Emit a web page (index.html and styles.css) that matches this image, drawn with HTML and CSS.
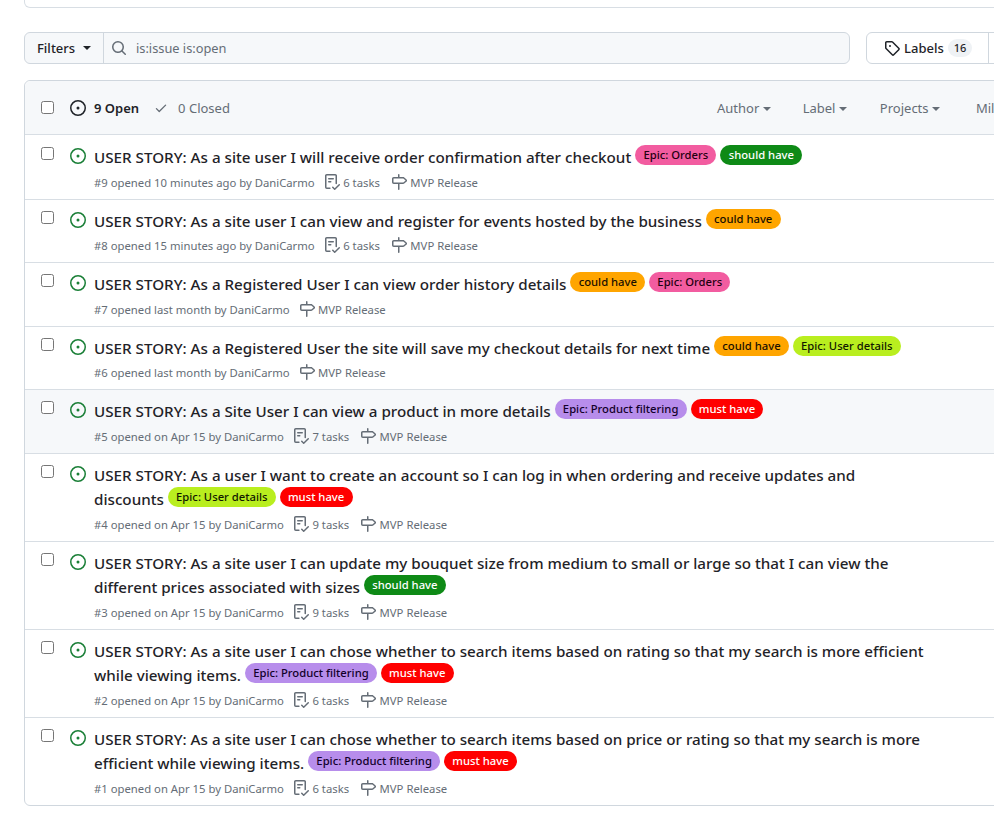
FILE: index.html
```html
<!DOCTYPE html>
<html>
<head>
  <meta charset="UTF-8">
  <title>Issues</title>
  <link rel="stylesheet" href="styles.css">
</head>
<body>

<svg class="sprites" width="0" height="0">
  <symbol id="i-issue" viewBox="0 0 16 16"><path d="M8 9.5a1.5 1.5 0 1 0 0-3 1.5 1.5 0 0 0 0 3Z"/><path d="M8 0a8 8 0 1 1 0 16A8 8 0 0 1 8 0ZM1.5 8a6.5 6.5 0 1 0 13 0 6.5 6.5 0 0 0-13 0Z"/></symbol>
  <symbol id="i-check" viewBox="0 0 16 16"><path d="M13.78 4.22a.75.75 0 0 1 0 1.06l-7.25 7.25a.75.75 0 0 1-1.06 0L2.22 9.28a.751.751 0 0 1 .018-1.042.751.751 0 0 1 1.042-.018L6 10.94l6.72-6.72a.75.75 0 0 1 1.06 0Z"/></symbol>
  <symbol id="i-search" viewBox="0 0 16 16"><path d="M10.68 11.74a6 6 0 0 1-7.922-8.982 6 6 0 0 1 8.982 7.922l3.04 3.04a.749.749 0 0 1-.326 1.275.749.749 0 0 1-.734-.215ZM11.5 7a4.499 4.499 0 1 0-8.997 0A4.499 4.499 0 0 0 11.5 7Z"/></symbol>
  <symbol id="i-tag" viewBox="0 0 16 16"><path d="M1 7.775V2.75C1 1.784 1.784 1 2.75 1h5.025c.464 0 .91.184 1.238.513l6.25 6.25a1.75 1.75 0 0 1 0 2.474l-5.026 5.026a1.75 1.75 0 0 1-2.474 0l-6.25-6.25A1.752 1.752 0 0 1 1 7.775Zm1.5 0c0 .066.026.13.073.177l6.25 6.25a.25.25 0 0 0 .354 0l5.025-5.025a.25.25 0 0 0 0-.354l-6.25-6.25a.25.25 0 0 0-.177-.073H2.75a.25.25 0 0 0-.25.25ZM6 5a1 1 0 1 1 0 2 1 1 0 0 1 0-2Z"/></symbol>
  <symbol id="i-milestone" viewBox="0 0 16 16"><path d="M7.75 0a.75.75 0 0 1 .75.75V3h3.634c.414 0 .814.147 1.13.414l2.07 1.75a1.75 1.75 0 0 1 0 2.672l-2.07 1.75a1.75 1.75 0 0 1-1.13.414H8.5v5.25a.75.75 0 0 1-1.5 0V10H2.75A1.75 1.75 0 0 1 1 8.25v-3.5C1 3.784 1.784 3 2.75 3H7V.75A.75.75 0 0 1 7.75 0Zm4.384 8.5a.25.25 0 0 0 .161-.06l2.07-1.75a.248.248 0 0 0 0-.38l-2.07-1.75a.25.25 0 0 0-.161-.06H2.75a.25.25 0 0 0-.25.25v3.5c0 .138.112.25.25.25h9.384Z"/></symbol>
  <symbol id="i-tasks" viewBox="0 0 16 16"><path d="M2.5 1.75v11.5c0 .138.112.25.25.25h3.17a.75.75 0 0 1 0 1.5H2.75A1.75 1.75 0 0 1 1 13.25V1.75C1 .784 1.784 0 2.75 0h8.5C12.216 0 13 .784 13 1.75v7.736a.75.75 0 0 1-1.5 0V1.75a.25.25 0 0 0-.25-.25h-8.5a.25.25 0 0 0-.25.25Zm13.274 9.537v-.001l-4.557 4.45a.75.75 0 0 1-1.055-.008l-1.943-1.95a.75.75 0 0 1 1.062-1.058l1.419 1.425 4.026-3.932a.75.75 0 1 1 1.048 1.074ZM4.75 4h4.5a.75.75 0 0 1 0 1.5h-4.5a.75.75 0 0 1 0-1.5ZM4 7.75A.75.75 0 0 1 4.75 7h2a.75.75 0 0 1 0 1.5h-2A.75.75 0 0 1 4 7.75Z"/></symbol>
</svg>

<div class="page">
  <div class="top-card"></div>

  <div class="toolbar">
    <div class="search">
      <div class="filters-btn">Filters <span class="caret"></span></div>
      <div class="search-field">
        <svg class="icon"><use href="#i-search"/></svg>
        <span>is:issue is:open</span>
      </div>
    </div>
    <div class="nav-group">
      <div class="nav-item">
        <svg class="icon"><use href="#i-tag"/></svg>
        Labels <span class="counter">16</span>
      </div>
      <div class="nav-item">Milestones</div>
    </div>
  </div>

  <div class="box">
    <div class="box-header">
      <input type="checkbox" class="check">
      <div class="states">
        <span class="state active"><svg class="icon"><use href="#i-issue"/></svg>9 Open</span>
        <span class="state"><svg class="icon small"><use href="#i-check"/></svg>0 Closed</span>
      </div>
      <div class="menus">
        <span class="menu">Author <span class="caret"></span></span>
        <span class="menu">Label <span class="caret"></span></span>
        <span class="menu projects">Projects <span class="caret"></span></span>
        <span class="menu wide">Milestones <span class="caret"></span></span>
        <span class="menu">Assignee <span class="caret"></span></span>
        <span class="menu">Sort <span class="caret"></span></span>
      </div>
    </div>

    <div class="row">
      <input type="checkbox" class="check">
      <svg class="icon open"><use href="#i-issue"/></svg>
      <div class="row-body">
        <div class="title">USER STORY: As a site user I will receive order confirmation after checkout <span class="label pink">Epic: Orders</span> <span class="label green">should have</span></div>
        <div class="meta">
          <span>#9 opened 10 minutes ago by DaniCarmo</span>
          <span class="meta-item"><svg class="icon"><use href="#i-tasks"/></svg>6 tasks</span>
          <span class="meta-item"><svg class="icon"><use href="#i-milestone"/></svg>MVP Release</span>
        </div>
      </div>
    </div>

    <div class="row short">
      <input type="checkbox" class="check">
      <svg class="icon open"><use href="#i-issue"/></svg>
      <div class="row-body">
        <div class="title">USER STORY: As a site user I can view and register for events hosted by the business <span class="label orange">could have</span></div>
        <div class="meta">
          <span>#8 opened 15 minutes ago by DaniCarmo</span>
          <span class="meta-item"><svg class="icon"><use href="#i-tasks"/></svg>6 tasks</span>
          <span class="meta-item"><svg class="icon"><use href="#i-milestone"/></svg>MVP Release</span>
        </div>
      </div>
    </div>

    <div class="row">
      <input type="checkbox" class="check">
      <svg class="icon open"><use href="#i-issue"/></svg>
      <div class="row-body">
        <div class="title">USER STORY: As a Registered User I can view order history details <span class="label orange">could have</span> <span class="label pink">Epic: Orders</span></div>
        <div class="meta">
          <span>#7 opened last month by DaniCarmo</span>
          <span class="meta-item"><svg class="icon"><use href="#i-milestone"/></svg>MVP Release</span>
        </div>
      </div>
    </div>

    <div class="row short">
      <input type="checkbox" class="check">
      <svg class="icon open"><use href="#i-issue"/></svg>
      <div class="row-body">
        <div class="title">USER STORY: As a Registered User the site will save my checkout details for next time <span class="label orange">could have</span> <span class="label lime">Epic: User details</span></div>
        <div class="meta">
          <span>#6 opened last month by DaniCarmo</span>
          <span class="meta-item"><svg class="icon"><use href="#i-milestone"/></svg>MVP Release</span>
        </div>
      </div>
    </div>

    <div class="row hover">
      <input type="checkbox" class="check">
      <svg class="icon open"><use href="#i-issue"/></svg>
      <div class="row-body">
        <div class="title">USER STORY: As a Site User I can view a product in more details <span class="label purple">Epic: Product filtering</span> <span class="label red">must have</span></div>
        <div class="meta">
          <span>#5 opened on Apr 15 by DaniCarmo</span>
          <span class="meta-item"><svg class="icon"><use href="#i-tasks"/></svg>7 tasks</span>
          <span class="meta-item"><svg class="icon"><use href="#i-milestone"/></svg>MVP Release</span>
        </div>
      </div>
    </div>

    <div class="row">
      <input type="checkbox" class="check">
      <svg class="icon open"><use href="#i-issue"/></svg>
      <div class="row-body">
        <div class="title">USER STORY: As a user I want to create an account so I can log in when ordering and receive updates and<br>discounts <span class="label lime">Epic: User details</span> <span class="label red">must have</span></div>
        <div class="meta">
          <span>#4 opened on Apr 15 by DaniCarmo</span>
          <span class="meta-item"><svg class="icon"><use href="#i-tasks"/></svg>9 tasks</span>
          <span class="meta-item"><svg class="icon"><use href="#i-milestone"/></svg>MVP Release</span>
        </div>
      </div>
    </div>

    <div class="row">
      <input type="checkbox" class="check">
      <svg class="icon open"><use href="#i-issue"/></svg>
      <div class="row-body">
        <div class="title">USER STORY: As a site user I can update my bouquet size from medium to small or large so that I can view the<br>different prices associated with sizes <span class="label green">should have</span></div>
        <div class="meta">
          <span>#3 opened on Apr 15 by DaniCarmo</span>
          <span class="meta-item"><svg class="icon"><use href="#i-tasks"/></svg>9 tasks</span>
          <span class="meta-item"><svg class="icon"><use href="#i-milestone"/></svg>MVP Release</span>
        </div>
      </div>
    </div>

    <div class="row">
      <input type="checkbox" class="check">
      <svg class="icon open"><use href="#i-issue"/></svg>
      <div class="row-body">
        <div class="title">USER STORY: As a site user I can chose whether to search items based on rating so that my search is more efficient<br>while viewing items. <span class="label purple">Epic: Product filtering</span> <span class="label red">must have</span></div>
        <div class="meta">
          <span>#2 opened on Apr 15 by DaniCarmo</span>
          <span class="meta-item"><svg class="icon"><use href="#i-tasks"/></svg>6 tasks</span>
          <span class="meta-item"><svg class="icon"><use href="#i-milestone"/></svg>MVP Release</span>
        </div>
      </div>
    </div>

    <div class="row">
      <input type="checkbox" class="check">
      <svg class="icon open"><use href="#i-issue"/></svg>
      <div class="row-body">
        <div class="title">USER STORY: As a site user I can chose whether to search items based on price or rating so that my search is more<br>efficient while viewing items. <span class="label purple">Epic: Product filtering</span> <span class="label red">must have</span></div>
        <div class="meta">
          <span>#1 opened on Apr 15 by DaniCarmo</span>
          <span class="meta-item"><svg class="icon"><use href="#i-tasks"/></svg>6 tasks</span>
          <span class="meta-item"><svg class="icon"><use href="#i-milestone"/></svg>MVP Release</span>
        </div>
      </div>
    </div>
  </div>
</div>

</body>
</html>
```

FILE: styles.css
```css
html, body {
  margin: 0;
  overflow: hidden;
  height: 100%;
}
body {
  background-color: #fff;
  color: #1f2328;
  font-family: "Noto Sans", sans-serif;
  font-size: 13px;
}
.sprites {
  position: absolute;
}
.page {
  width: 1240px;
  margin-left: 24px;
}
.icon {
  width: 16px;
  height: 16px;
  fill: currentColor;
  flex: none;
}
.icon.small {
  width: 14px;
  height: 14px;
}
.caret {
  display: inline-block;
  width: 0;
  height: 0;
  border-style: solid;
  border-width: 4px 4px 0;
  border-color: currentColor transparent transparent;
  vertical-align: middle;
}

.top-card {
  height: 7px;
  border: 1px solid #d8dee4;
  border-top: none;
  border-radius: 0 0 6px 6px;
}

.toolbar {
  display: flex;
  margin-top: 24px;
  gap: 16px;
}
.search {
  display: flex;
  width: 826px;
  height: 32px;
  box-sizing: border-box;
  border: 1px solid #d0d7de;
  border-radius: 6px;
  background-color: #f6f8fa;
}
.filters-btn {
  display: flex;
  align-items: center;
  gap: 8px;
  width: 79px;
  box-sizing: border-box;
  padding-left: 12px;
  border-right: 1px solid #d0d7de;
  font-weight: 500;
}
.search-field {
  display: flex;
  align-items: center;
  gap: 9px;
  padding-left: 7px;
  font-size: 12.8px;
  color: #656d76;
}
.nav-group {
  display: flex;
  height: 32px;
  box-sizing: border-box;
  border: 1px solid #d0d7de;
  border-radius: 6px;
}
.nav-item {
  display: flex;
  align-items: center;
  gap: 4px;
  padding: 0 16px 0 17px;
  font-weight: 500;
}
.nav-item + .nav-item {
  border-left: 1px solid #d0d7de;
}
.counter {
  padding: 0 6px;
  border-radius: 10px;
  background-color: #eff2f5;
  font-size: 11px;
  line-height: 18px;
}

.box {
  margin-top: 16px;
  border: 1px solid #d0d7de;
  border-radius: 6px;
}
.box-header {
  display: flex;
  align-items: center;
  height: 53px;
  background-color: #f6f8fa;
  border-radius: 6px 6px 0 0;
}
.check {
  width: 13px;
  height: 13px;
  margin: 0 0 0 16px;
  flex: none;
}
.states {
  display: flex;
  gap: 15px;
  width: 647px;
  margin-left: 16px;
}
.state {
  display: flex;
  align-items: center;
  gap: 10px;
  color: #656d76;
}
.state.active {
  gap: 8px;
  color: #1f2328;
  font-weight: 600;
}
.menus {
  display: flex;
  gap: 32px;
  color: #656d76;
  white-space: nowrap;
}
.menu.projects {
  margin-left: 1px;
}
.menu.wide {
  margin-left: 4px;
}

.row {
  display: flex;
  align-items: flex-start;
  box-sizing: border-box;
  padding: 9px 0 7px;
  border-top: 1px solid #d8dee4;
}
.box-header + .row {
  padding-top: 10px;
}
.row.hover {
  background-color: #f6f8fa;
}
.row .check {
  margin-top: 2px;
}
.row .open {
  margin: 3px 0 0 16px;
  color: #1a7f37;
}
.row-body {
  margin-left: 8px;
}
.title {
  font-size: 15.2px;
  font-weight: 500;
  line-height: 24px;
  white-space: nowrap;
}
.label {
  display: inline-block;
  padding: 0 8.25px;
  border-radius: 10px;
  font-size: 11.25px;
  font-weight: 500;
  line-height: 20px;
  vertical-align: top;
}
.pink { background-color: #f25ca0; color: #1f0010; }
.green { background-color: #0e8a16; color: #fff; }
.orange { background-color: #ffa500; color: #1a1000; }
.lime { background-color: #b9ee1f; color: #111800; }
.purple { background-color: #b78deb; color: #12002a; }
.red { background-color: #ff0000; color: #fff; }

.meta {
  display: flex;
  align-items: center;
  gap: 9px;
  height: 20px;
  margin-top: 3px;
  font-size: 11.3px;
  color: #656d76;
}
.short .meta {
  margin-top: 2px;
}
.meta-item {
  display: flex;
  align-items: center;
  gap: 3.5px;
}
.meta-item + .meta-item {
  margin-left: 2px;
}
```
